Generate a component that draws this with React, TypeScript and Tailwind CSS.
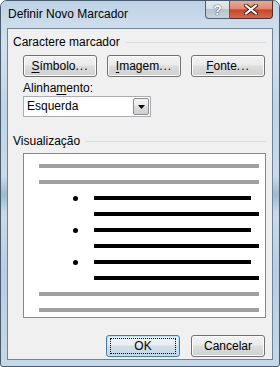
import React from 'react';

const font = "font-['Liberation_Sans',Arial,sans-serif]";

function Accel({ text, at }: { text: string; at: number }) {
  const rest = text.slice(at + 1);
  const dots = rest.endsWith('...');
  return (
    <>
      {text.slice(0, at)}
      <span className="underline underline-offset-[2px]">{text[at]}</span>
      {dots ? rest.slice(0, -3) : rest}
      {dots && <span className="tracking-[1px]">...</span>}
    </>
  );
}

function PushButton({ children, focused }: { children: React.ReactNode; focused?: boolean }) {
  return (
    <div
      className={`w-[74px] h-[22px] rounded-[3px] border flex items-center justify-center text-[12px] text-black ${
        focused
          ? 'border-[#3c7fb1] bg-[linear-gradient(to_bottom,#f1f5f8_0%,#e8eef2_45%,#d2dfe8_50%,#c8d6e1_100%)] shadow-[inset_0_0_0_1px_#bfe4f8]'
          : 'border-[#707070] bg-[linear-gradient(to_bottom,#f2f2f2_0%,#ebebeb_45%,#dddddd_50%,#cfcfcf_100%)] shadow-[inset_0_0_0_1px_#fcfcfc]'
      }`}
    >
      {focused ? (
        <div className="w-[66px] h-[16px] border border-dotted border-black flex items-center justify-center">
          {children}
        </div>
      ) : (
        children
      )}
    </div>
  );
}

function GroupHeader({ label }: { label: string }) {
  return (
    <div className="flex items-center h-[15px] mt-[6px] pl-[5px]">
      <span className="text-[12px] leading-[15px] text-black">{label}</span>
      <div className="flex-1 h-px bg-[#d5dfe5] ml-[5px]" />
    </div>
  );
}

const rows: ('gray' | 'bullet' | 'cont')[] = [
  'gray',
  'gray',
  'bullet',
  'cont',
  'bullet',
  'cont',
  'bullet',
  'cont',
  'gray',
  'gray',
];

export default function App() {
  return (
    <div className={`w-[280px] h-[367px] bg-white ${font}`}>
      <div className="w-full h-full rounded-t-[7px] rounded-b-[3px] border border-[#475b6e] bg-[linear-gradient(to_bottom,#bcd1e4_0%,#d3e1ee_12%,#bfd4e6_30%,#c9dbea_48%,#9fb8cf_53%,#c9dbea_58%,#b7cde1_75%,#c7d9e9_100%)] flex flex-col">
        {/* title bar */}
        <div className="h-[27px] flex items-start justify-between shrink-0 bg-[linear-gradient(to_bottom,#bdd2e5,#cfdeec)] rounded-t-[6px]">
          <span className="pl-[7px] pt-[6px] text-[12px] leading-[15px] text-black">Definir Novo Marcador</span>
          <div className="flex mr-[6px]">
            <div className="w-[25px] h-[18px] rounded-bl-[4px] border border-t-0 border-[#51606f] bg-[linear-gradient(to_bottom,#e3e9ef_0%,#d4dde6_45%,#b8c4d0_50%,#c8d3dd_100%)] flex items-center justify-center">
              <span className="text-[14px] leading-[14px] font-bold text-white [text-shadow:0_0_1px_#2d3a48,0_0_1px_#2d3a48]">?</span>
            </div>
            <div className="w-[43px] h-[18px] rounded-br-[4px] border border-l-0 border-t-0 border-[#5b2a22] bg-[linear-gradient(to_bottom,#e9a898_0%,#de8a72_45%,#c7482b_52%,#d46a4c_100%)] flex items-center justify-center">
              <svg width="14" height="11" viewBox="0 0 14 11">
                <path d="M2 1.5 L12 9.5 M12 1.5 L2 9.5" stroke="#4a1a12" strokeWidth="4" strokeLinecap="square" />
                <path d="M2 1.5 L12 9.5 M12 1.5 L2 9.5" stroke="#ffffff" strokeWidth="2" strokeLinecap="square" />
              </svg>
            </div>
          </div>
        </div>

        {/* client area */}
        <div className="mx-[6px] h-[332px] border border-[#6f8499] bg-[#f0f0f0] flex flex-col pr-[6px] text-[12px] text-black">
          <GroupHeader label="Caractere marcador" />
          <div className="flex gap-[10px] pl-[15px] mt-[5px]">
            <PushButton>
              <Accel text="Símbolo..." at={0} />
            </PushButton>
            <PushButton>
              <Accel text="Imagem..." at={0} />
            </PushButton>
            <PushButton>
              <Accel text="Fonte..." at={0} />
            </PushButton>
          </div>

          <div className="pl-[15px] mt-[4px] h-[15px] leading-[15px]">
            <Accel text="Alinhamento:" at={6} />
          </div>
          <div className="ml-[15px] w-[128px] h-[21px] border border-[#abadb3] bg-white flex items-center">
            <span className="flex-1 pl-[3px] leading-[15px]">Esquerda</span>
            <div className="w-[16px] h-[17px] mr-px border border-[#8d8d8d] rounded-[2px] bg-[linear-gradient(to_bottom,#f2f2f2_0%,#ebebeb_45%,#dddddd_50%,#cfcfcf_100%)] flex items-center justify-center">
              <svg width="7" height="4" viewBox="0 0 7 4">
                <path d="M0 0 H7 L3.5 4 Z" fill="#000" />
              </svg>
            </div>
          </div>

          <div className="mt-[11px]">
            <GroupHeader label="Visualização" />
          </div>
          <div className="ml-[15px] mt-[4px] h-[165px] border border-[#828790] bg-white flex flex-col gap-[12px] pt-[10px]">
            {rows.map((r, i) => (
              <div key={i} className="h-[4px] flex items-center shrink-0">
                {r === 'gray' && <div className="ml-[15px] w-[220px] h-[4px] bg-[#a0a0a0]" />}
                {r === 'bullet' && (
                  <>
                    <div className="ml-[49px] w-[5px] h-[5px] rounded-full bg-black shrink-0" />
                    <div className="ml-[16px] w-[157px] h-[4px] bg-black" />
                  </>
                )}
                {r === 'cont' && <div className="ml-[70px] w-[165px] h-[4px] bg-black" />}
              </div>
            ))}
          </div>

          <div className="flex justify-end gap-[11px] mt-[17px] pr-px">
            <PushButton focused>OK</PushButton>
            <PushButton>Cancelar</PushButton>
          </div>
        </div>
      </div>
    </div>
  );
}
